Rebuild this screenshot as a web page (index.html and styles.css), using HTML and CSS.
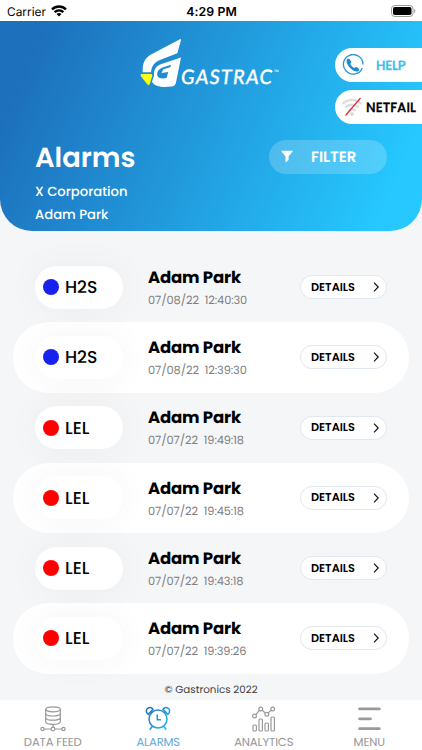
FILE: index.html
```html
<!DOCTYPE html>
<html lang="en">
<head>
<meta charset="utf-8">
<meta name="viewport" content="width=device-width, initial-scale=1">
<title>Gastrac Alarms</title>
<link rel="stylesheet" href="styles.css">
</head>
<body>
<div class="app">
  <div class="status">
    <div class="carrier"><span>Carrier</span>
      <svg width="16" height="12" viewBox="0 0 16 12" fill="none" stroke="#000" stroke-width="2.3"><path d="M1 4.4C5 .5 11 .5 15 4.4M3.6 7.2c2.5-2.3 6.3-2.3 8.8 0"/><path d="M8 11.4 5.5 8.9c1.4-1.3 3.6-1.3 5 0z" fill="#000" stroke="none"/></svg>
    </div>
    <span class="time">4:29 PM</span>
    <svg class="battery" width="25" height="12" viewBox="0 0 25 12"><rect x=".5" y=".5" width="21.5" height="11" rx="3.2" fill="none" stroke="#999"/><rect x="2" y="2" width="18.5" height="8" rx="1.8"/><path d="M23.3 4v4c1.4-.6 1.4-3.4 0-4z" fill="#888"/></svg>
  </div>

  <header class="header">
    <div class="logo">
      <svg width="42" height="50" viewBox="0 0 42 50"><path d="M40 1.300Q41.200.700 41 2L37.300 15.300 20.500 21.800C14 24.500 11.500 28.500 11 34.300H2.800C2.300 25 4.500 20.500 11 16.500z" fill="#fff"/><path fill-rule="evenodd" d="M41 19.500 36 44.500C35.300 47.500 34 48.300 31 48.600 23 49.600 14.500 49 12 43.800L14 37.500C13.500 31.500 16 27.800 21.500 26zM31 26.800 22.500 29.500C18.500 31 16.800 34 17.300 37.500 18 40.500 22 40.800 26.600 40L28.200 34 21.500 35 23.300 31.300 30.300 29.300z" fill="#fff"/><path d="M1.500 36H10.800Q12.800 36 12.200 38L9.800 46Q8.800 48 7.300 46.200L.9 38.200Q0 36.200 1.500 36z" fill="#fcff16"/></svg>
      <span class="brand">GASTRAC</span><span class="tm">™</span>
    </div>
    <div class="tabs">
      <div class="tab help">
        <svg width="22" height="22" viewBox="0 0 22 22"><path d="M20.300 14A9.800 9.800 0 1 1 21 10.500" fill="none" stroke="#2895d5" stroke-width="1.300"/><path d="M5.700 4.500C4 6 4.200 8.500 6 11.200c2 3.200 5.500 6 8.300 6.300 1.800.1 2.900-.8 3-1.800 0-.8-2.600-3-3.500-2.700l-1.500 1c-1.500-.6-3.200-2.300-4-4l1-1.600C9.700 7.300 7 3.700 5.700 4.500z" fill="#2189cc"/></svg>
        <span>HELP</span>
      </div>
      <div class="tab netfail">
        <svg width="22" height="20" viewBox="0 0 22 20"><g fill="none" stroke="#dedede" stroke-width="2.400"><path d="M1.500 7C7 1.500 15 1.500 20.500 7M4.300 10.500c4-3.600 9.400-3.600 13.400 0M7.300 13.800c2.300-2 5.100-2 7.400 0"/></g><circle cx="11" cy="17" r="2" fill="#dedede"/><path d="M4.500 18.500 19.500 1" stroke="#e22b37" stroke-width="1.200"/></svg>
        <span>NETFAIL</span>
      </div>
    </div>
    <div class="heading">
      <h1>Alarms</h1>
      <div class="filter">
        <svg width="12" height="13" viewBox="0 0 12 13"><path d="M.6.800h10.800q.7 0 .2.700L7.600 6.200V10L5 12.200q-.5.300-.5-.3V6.200L.4 1.500Q0 .800.600.800z" fill="#fff"/></svg>
        <span>FILTER</span>
      </div>
    </div>
    <p class="company">X Corporation</p>
    <p class="user">Adam Park</p>
  </header>

  <main class="list">
    <div class="row"><div class="gas"><i class="dot blue"></i><span>H2S</span></div><div class="info"><b>Adam Park</b><time>07/08/22&nbsp; 12:40:30</time></div><div class="details"><span>DETAILS</span><svg width="6" height="10" viewBox="0 0 6 10"><path d="m1 .700 4.200 4.300L1 9.300"/></svg></div></div>
    <div class="row card"><div class="gas"><i class="dot blue"></i><span>H2S</span></div><div class="info"><b>Adam Park</b><time>07/08/22&nbsp; 12:39:30</time></div><div class="details"><span>DETAILS</span><svg width="6" height="10" viewBox="0 0 6 10"><path d="m1 .700 4.200 4.300L1 9.300"/></svg></div></div>
    <div class="row"><div class="gas"><i class="dot red"></i><span>LEL</span></div><div class="info"><b>Adam Park</b><time>07/07/22&nbsp; 19:49:18</time></div><div class="details"><span>DETAILS</span><svg width="6" height="10" viewBox="0 0 6 10"><path d="m1 .700 4.200 4.300L1 9.300"/></svg></div></div>
    <div class="row card"><div class="gas"><i class="dot red"></i><span>LEL</span></div><div class="info"><b>Adam Park</b><time>07/07/22&nbsp; 19:45:18</time></div><div class="details"><span>DETAILS</span><svg width="6" height="10" viewBox="0 0 6 10"><path d="m1 .700 4.200 4.300L1 9.300"/></svg></div></div>
    <div class="row"><div class="gas"><i class="dot red"></i><span>LEL</span></div><div class="info"><b>Adam Park</b><time>07/07/22&nbsp; 19:43:18</time></div><div class="details"><span>DETAILS</span><svg width="6" height="10" viewBox="0 0 6 10"><path d="m1 .700 4.200 4.300L1 9.300"/></svg></div></div>
    <div class="row card"><div class="gas"><i class="dot red"></i><span>LEL</span></div><div class="info"><b>Adam Park</b><time>07/07/22&nbsp; 19:39:26</time></div><div class="details"><span>DETAILS</span><svg width="6" height="10" viewBox="0 0 6 10"><path d="m1 .700 4.200 4.300L1 9.300"/></svg></div></div>
  </main>
  <div class="copyright">© Gastronics 2022</div>

  <nav class="nav">
    <div class="item feed">
      <svg width="26" height="26" viewBox="0 0 26 26" fill="none" stroke="#999" stroke-width="1.200"><ellipse cx="13" cy="3.300" rx="7.300" ry="2.500"/><path d="M5.700 3.300v12.500c0 3.400 14.600 3.400 14.600 0V3.300M5.700 7.500c0 3.300 14.600 3.300 14.600 0M5.700 11.700c0 3.300 14.600 3.300 14.600 0M13 18.300v3M4 23h7.200M14.800 23H22"/><circle cx="2.500" cy="23" r="1.600"/><circle cx="13" cy="23" r="1.800"/><circle cx="23.500" cy="23" r="1.600"/></svg>
      <span>DATA FEED</span>
    </div>
    <div class="item alarms">
      <svg width="26" height="26" viewBox="0 0 26 26" fill="none" stroke="url(#clock)" stroke-width="1.500"><defs><linearGradient id="clock" gradientUnits="userSpaceOnUse" x1="2" y1="2" x2="24" y2="23"><stop stop-color="#1c6db8"/><stop offset="1" stop-color="#28bdf5"/></linearGradient></defs><circle cx="13" cy="13" r="9"/><path d="M3.200 8.300C.6 6.500 1 3.300 3 2.200 5.200 1 7.200 1.600 8 3.300zM22.800 8.300c2.600-1.800 2.200-5 .2-6.100-2.200-1.200-4.200-.6-5 1.100zM12.300 8.500v5.300h3.700M7.200 20.500l-2.500 3.300M18.800 20.500l2.500 3.300"/></svg>
      <span>ALARMS</span>
    </div>
    <div class="item analytics">
      <svg width="26" height="26" viewBox="0 0 26 26" fill="none" stroke="#999" stroke-width="1.200"><rect x="2" y="19" width="3.400" height="6" rx="1"/><rect x="8" y="13" width="3.400" height="12" rx="1"/><rect x="14" y="17" width="3.400" height="8" rx="1"/><rect x="20" y="11" width="3.400" height="14" rx="1"/><circle cx="3.500" cy="10" r="1.900"/><circle cx="9.700" cy="3" r="1.900"/><circle cx="15.800" cy="8.200" r="1.900"/><circle cx="21.700" cy="3" r="1.900"/><path d="m4.800 8.600 3.600-4.200M11.200 4.300l3.100 2.600M17.200 6.900l3.200-2.600"/></svg>
      <span>ANALYTICS</span>
    </div>
    <div class="item menu">
      <svg width="26" height="26" viewBox="0 0 26 26" stroke="#9a9a9a" stroke-width="2.800" stroke-linecap="round"><path d="M3.600 2.900h19.700M3.600 12.800H14.500M3.600 22.700h19.700"/></svg>
      <span>MENU</span>
    </div>
  </nav>
</div>
</body>
</html>
```
FILE: styles.css
```css
* { box-sizing: border-box; }
body { margin: 0; background: #f5f6f8; font-family: Poppins, Inter, sans-serif; color: #000; text-rendering: geometricPrecision; }
.app { width: 422px; height: 750px; display: flex; flex-direction: column; overflow: hidden; }
svg { display: block; flex: none; }
span, b, time, h1, p { white-space: nowrap; }

.status { height: 21px; flex: none; background: #fff; display: grid; grid-template-columns: 1fr auto 1fr; align-items: center; padding: 1px 6px 0 7px; font-family: Inter, sans-serif; }
.carrier { display: flex; align-items: center; gap: 5px; font-size: 11.9px; }
.time { font-size: 12.3px; font-weight: 600; letter-spacing: .1px; }
.battery { justify-self: end; margin-top: -1px; }

.header { position: relative; height: 210px; flex: none; padding: 17px 35px 0; border-radius: 0 0 32px 32px; background: linear-gradient(113deg, #1d70bc 9%, #26c8ff 91%); color: #fff; }
.logo { display: flex; height: 50px; margin-left: 105px; }
.brand { font-family: Lato, sans-serif; font-style: italic; font-size: 20px; line-height: 24px; font-weight: 500; letter-spacing: 1.2px; margin: 27px 0 0 -1px; -webkit-text-stroke: .3px #fff; }
.tm { font-size: 6px; line-height: 8px; margin: 31px 0 0 1px; }
.tabs { position: absolute; right: 0; top: 27px; display: flex; flex-direction: column; gap: 8px; }
.tab { width: 87px; height: 34px; background: #fff; border-radius: 17px 0 0 17px; display: flex; align-items: center; padding-left: 7px; }
.tab span { padding-top: 2px; }
.help { color: #35c1ed; font-size: 13.4px; font-weight: 500; gap: 12px; }
.help span { letter-spacing: -.2px; -webkit-text-stroke: .35px; }
.netfail { color: #000; font-size: 13.3px; font-weight: 500; gap: 3px; padding-left: 6px; }
.netfail span { letter-spacing: .05px; -webkit-text-stroke: .35px; }
.heading { display: flex; justify-content: space-between; align-items: center; height: 36px; margin-top: 51px; }
h1 { margin: 1px 0 0; font-size: 27.4px; font-weight: 600; }
.filter { width: 118px; height: 34px; border-radius: 17px; background: rgba(255,255,255,.2); display: flex; align-items: center; gap: 18px; padding-left: 12px; font-size: 15px; font-weight: 600; margin-top: -1px; }
.filter span { padding-top: 2px; }
.company, .user { margin: 0; font-size: 13.2px; line-height: 23px; font-weight: 500; }
.company { margin-top: 5px; }

.list { margin: 21px 13px 0; display: flex; flex-direction: column; }
.row { height: 70.25px; flex: none; display: flex; align-items: center; padding: 0 22px; border-radius: 35px; }
.card { background: #fff; }
.gas { width: 88px; height: 43px; background: #fff; border-radius: 21.5px; display: flex; align-items: center; gap: 6px; padding-left: 8px; font-size: 17.2px; font-weight: 500; box-shadow: 0 0 36px rgba(0,0,0,.045); }
.gas span { padding-top: 2px; }
.dot { width: 16px; height: 16px; border-radius: 50%; }
.blue { background: #1722ee; }
.red { background: #ff0000; }
.info { margin-left: 25px; width: 152px; display: flex; flex-direction: column; position: relative; top: 1.8px; }
.info b { font-size: 16.5px; line-height: 22px; font-weight: 700; letter-spacing: -.15px; }
.info time { font-size: 11.4px; line-height: 22px; font-weight: 400; letter-spacing: -.1px; color: #808080; }
.details { width: 87px; height: 24px; border: 1px solid #e0e7f0; border-radius: 12px; background: #fff; display: flex; align-items: center; justify-content: space-between; padding: 0 7px 0 10px; font-size: 11.3px; font-weight: 600; }
.details svg { fill: none; stroke: #111; stroke-width: 1.2; }
.copyright { font-size: 10.3px; line-height: 16px; text-align: center; margin-top: 8px; color: #3e3e3e; }

.nav { height: 51px; flex: none; margin-top: auto; background: #fff; display: grid; grid-template-columns: repeat(4, 1fr); border-top: 1px solid #f8f8f9; }
.item { display: flex; flex-direction: column; align-items: center; padding-top: 6px; font-size: 11.6px; line-height: 14px; gap: 4px; font-weight: 400; letter-spacing: -.15px; color: #969696; }
.alarms { color: #62aadd; }
```
